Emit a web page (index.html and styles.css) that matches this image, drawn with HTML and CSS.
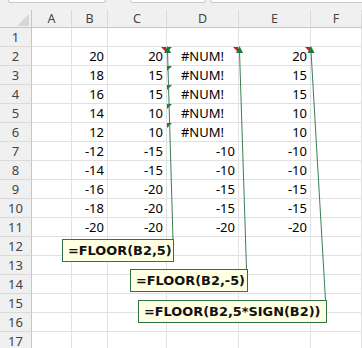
FILE: index.html
```html
<!DOCTYPE html>
<html>
<head>
<meta charset="utf-8">
<link rel="stylesheet" href="styles.css">
</head>
<body>
<div class="app">
  <div class="topbar">
    <div class="tb tb1"></div>
    <div class="tb tb2"></div>
    <div class="tb tb3"></div>
  </div>
  <div class="sheet">
    <div class="corner"><span class="tri"></span></div>
    <div class="ch">A</div><div class="ch">B</div><div class="ch">C</div><div class="ch">D</div><div class="ch">E</div><div class="ch">F</div>

    <div class="rh">1</div><div class="cell"></div><div class="cell"></div><div class="cell"></div><div class="cell"></div><div class="cell"></div><div class="cell"></div>
    <div class="rh">2</div><div class="cell"></div><div class="cell">20</div><div class="cell cm">20</div><div class="cell c err cm">#NUM!</div><div class="cell cm">20</div><div class="cell"></div>
    <div class="rh">3</div><div class="cell"></div><div class="cell">18</div><div class="cell">15</div><div class="cell c err">#NUM!</div><div class="cell">15</div><div class="cell"></div>
    <div class="rh">4</div><div class="cell"></div><div class="cell">16</div><div class="cell">15</div><div class="cell c err">#NUM!</div><div class="cell">15</div><div class="cell"></div>
    <div class="rh">5</div><div class="cell"></div><div class="cell">14</div><div class="cell">10</div><div class="cell c err">#NUM!</div><div class="cell">10</div><div class="cell"></div>
    <div class="rh">6</div><div class="cell"></div><div class="cell">12</div><div class="cell">10</div><div class="cell c err">#NUM!</div><div class="cell">10</div><div class="cell"></div>
    <div class="rh">7</div><div class="cell"></div><div class="cell">-12</div><div class="cell">-15</div><div class="cell">-10</div><div class="cell">-10</div><div class="cell"></div>
    <div class="rh">8</div><div class="cell"></div><div class="cell">-14</div><div class="cell">-15</div><div class="cell">-10</div><div class="cell">-10</div><div class="cell"></div>
    <div class="rh">9</div><div class="cell"></div><div class="cell">-16</div><div class="cell">-20</div><div class="cell">-15</div><div class="cell">-15</div><div class="cell"></div>
    <div class="rh">10</div><div class="cell"></div><div class="cell">-18</div><div class="cell">-20</div><div class="cell">-15</div><div class="cell">-15</div><div class="cell"></div>
    <div class="rh">11</div><div class="cell"></div><div class="cell">-20</div><div class="cell">-20</div><div class="cell">-20</div><div class="cell">-20</div><div class="cell"></div>
    <div class="rh">12</div><div class="cell"></div><div class="cell"></div><div class="cell"></div><div class="cell"></div><div class="cell"></div><div class="cell"></div>
    <div class="rh">13</div><div class="cell"></div><div class="cell"></div><div class="cell"></div><div class="cell"></div><div class="cell"></div><div class="cell"></div>
    <div class="rh">14</div><div class="cell"></div><div class="cell"></div><div class="cell"></div><div class="cell"></div><div class="cell"></div><div class="cell"></div>
    <div class="rh">15</div><div class="cell"></div><div class="cell"></div><div class="cell"></div><div class="cell"></div><div class="cell"></div><div class="cell"></div>
    <div class="rh">16</div><div class="cell"></div><div class="cell"></div><div class="cell"></div><div class="cell"></div><div class="cell"></div><div class="cell"></div>
    <div class="rh">17</div><div class="cell"></div><div class="cell"></div><div class="cell"></div><div class="cell"></div><div class="cell"></div><div class="cell"></div>
  </div>

  <svg class="links" width="362" height="348" viewBox="0 0 362 348">
    <g stroke="#3d7f57" stroke-width="1" fill="none">
      <line x1="173" y1="239.5" x2="167.5" y2="51"/>
      <line x1="246.5" y1="269.5" x2="239.5" y2="51"/>
      <line x1="325.5" y1="300.5" x2="311" y2="51"/>
    </g>
    <g fill="#1e7a3c">
      <polygon points="167.5,46 171,53 164,53"/>
      <polygon points="239.5,46 243,53 236,53"/>
      <polygon points="311,46 314.5,53 307.5,53"/>
    </g>
  </svg>

  <div class="note n1">=FLOOR(B2,5)</div>
  <div class="note n2">=FLOOR(B2,-5)</div>
  <div class="note n3">=FLOOR(B2,5*SIGN(B2))</div>
</div>
</body>
</html>
```
FILE: styles.css
```css
* { box-sizing: border-box; }
html, body { margin: 0; padding: 0; background: #fff; }
body { font-family: "Noto Sans", "Liberation Sans", sans-serif; }

.app {
  position: relative;
  width: 362px;
  height: 348px;
  overflow: hidden;
  background: #fff;
}

.topbar {
  display: flex;
  align-items: flex-start;
  height: 10px;
  background: #f0f0f0;
}
.tb {
  height: 3px;
  background: #fff;
  border: 1px solid #c9c9c9;
  border-top: none;
  border-radius: 0 0 3px 3px;
}
.tb1 { margin-left: 8px; width: 98px; }
.tb2 { margin-left: 24px; width: 76px; }
.tb3 { margin-left: 4px; flex: 1; border-right: none; border-radius: 0 0 0 3px; }

.sheet {
  display: grid;
  grid-template-columns: 32px 40px 36px 59px 72px 72px 1fr;
  grid-template-rows: 18px;
  grid-auto-rows: 19px;
}

.corner {
  background: #f0f0f0;
  border-right: 1px solid #c6c6c6;
  border-bottom: 1px solid #c6c6c6;
  display: flex;
  justify-content: flex-end;
  align-items: flex-end;
  padding: 0 2px 1px 0;
}
.tri {
  width: 0;
  height: 0;
  border-left: 12px solid transparent;
  border-bottom: 12px solid #d6d6d6;
}

.ch {
  background: #f0f0f0;
  border-right: 1px solid #d9d9d9;
  border-bottom: 1px solid #c6c6c6;
  color: #444;
  font-size: 12.5px;
  line-height: 17px;
  text-align: center;
}

.rh {
  background: #f0f0f0;
  border-right: 1px solid #c6c6c6;
  border-bottom: 1px solid #dadada;
  color: #444;
  font-size: 13px;
  line-height: 18px;
  text-align: center;
}

.cell {
  position: relative;
  border-right: 1px solid #e1e1e1;
  border-bottom: 1px solid #e1e1e1;
  color: #000;
  font-size: 13px;
  line-height: 18px;
  text-align: right;
  padding: 0 3px 0 2px;
  white-space: nowrap;
}
.cell.c { text-align: center; padding: 0; }

.cm::after {
  content: "";
  position: absolute;
  top: 0;
  right: 0;
  width: 0;
  height: 0;
  border-top: 5px solid #e81010;
  border-left: 5px solid transparent;
}
.err::before {
  content: "";
  position: absolute;
  top: 0;
  left: 0;
  width: 0;
  height: 0;
  border-top: 5px solid #1d7a36;
  border-right: 5px solid transparent;
}

.links {
  position: absolute;
  left: 0;
  top: 0;
}

.note {
  position: absolute;
  height: 23px;
  background: #ffffe1;
  border: 1px solid #2c7448;
  padding: 0 0 0 5px;
  font-family: "DejaVu Sans", "Verdana", sans-serif;
  font-weight: bold;
  font-size: 12.9px;
  line-height: 21px;
  color: #111;
  white-space: nowrap;
}
.n1 { left: 62px; top: 239px; width: 112px; }
.n2 { left: 130px; top: 269px; width: 118px; }
.n3 { left: 138px; top: 300px; width: 189px; }
```
